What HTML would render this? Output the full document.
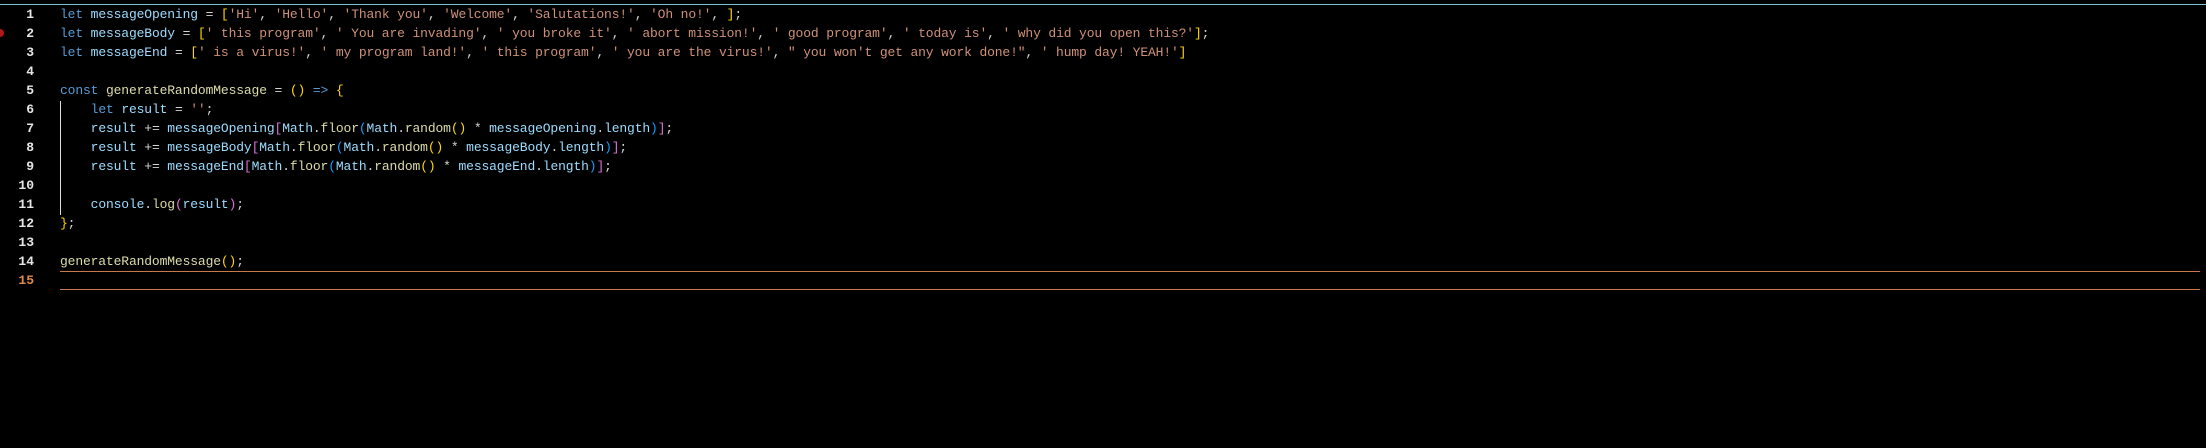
<!DOCTYPE html>
<html><head><meta charset="utf-8"><style>
html,body{margin:0;padding:0;background:#000;width:2206px;height:448px;overflow:hidden;position:relative}
.top{position:absolute;left:0;top:4px;width:2206px;height:1px;background:#7fc4d4}
.code{position:absolute;left:0;top:5px;font-family:"Liberation Mono",monospace;font-size:13px;letter-spacing:-0.14px;line-height:19px;color:#d4d4d4;white-space:pre}
.ln{position:absolute;left:0;width:34px;text-align:right;color:#e6e6e6;font-weight:bold;letter-spacing:0}
.tx{position:absolute;left:60px}
.k{color:#569cd6}.v{color:#9cdcfe}.s{color:#ce9178}.f{color:#dcdcaa}.g{color:#ffd700}.p{color:#da70d6}.b{color:#179fff}
.guide{position:absolute;left:60px;top:101px;width:1px;height:114px;background:#ddd}
.box{position:absolute;left:60px;top:271px;width:2140px;height:17px;border-top:1px solid #c8784a;border-bottom:1px solid #c8784a}
.dot{position:absolute;left:-4px;top:29px;width:8px;height:8px;border-radius:50%;background:#b01818}
</style></head><body>
<div class="top"></div>
<div class="dot"></div>
<div class="guide"></div>
<div class="box"></div>
<div class="code">
<div class="ln" style="top:0">1</div>
<div class="ln" style="top:19px">2</div>
<div class="ln" style="top:38px">3</div>
<div class="ln" style="top:57px">4</div>
<div class="ln" style="top:76px">5</div>
<div class="ln" style="top:95px">6</div>
<div class="ln" style="top:114px">7</div>
<div class="ln" style="top:133px">8</div>
<div class="ln" style="top:152px">9</div>
<div class="ln" style="top:171px">10</div>
<div class="ln" style="top:190px">11</div>
<div class="ln" style="top:209px">12</div>
<div class="ln" style="top:228px">13</div>
<div class="ln" style="top:247px">14</div>
<div class="ln" style="top:266px;color:#e08a48">15</div>
<div class="tx" style="top:0"><span class="k">let</span> <span class="v">messageOpening</span> = <span class="g">[</span><span class="s">'Hi'</span>, <span class="s">'Hello'</span>, <span class="s">'Thank you'</span>, <span class="s">'Welcome'</span>, <span class="s">'Salutations!'</span>, <span class="s">'Oh no!'</span>, <span class="g">]</span>;</div>
<div class="tx" style="top:19px"><span class="k">let</span> <span class="v">messageBody</span> = <span class="g">[</span><span class="s">' this program'</span>, <span class="s">' You are invading'</span>, <span class="s">' you broke it'</span>, <span class="s">' abort mission!'</span>, <span class="s">' good program'</span>, <span class="s">' today is'</span>, <span class="s">' why did you open this?'</span><span class="g">]</span>;</div>
<div class="tx" style="top:38px"><span class="k">let</span> <span class="v">messageEnd</span> = <span class="g">[</span><span class="s">' is a virus!'</span>, <span class="s">' my program land!'</span>, <span class="s">' this program'</span>, <span class="s">' you are the virus!'</span>, <span class="s">" you won't get any work done!"</span>, <span class="s">' hump day! YEAH!'</span><span class="g">]</span></div>
<div class="tx" style="top:76px"><span class="k">const</span> <span class="f">generateRandomMessage</span> = <span class="g">()</span> <span class="k">=&gt;</span> <span class="g">{</span></div>
<div class="tx" style="top:95px">    <span class="k">let</span> <span class="v">result</span> = <span class="s">''</span>;</div>
<div class="tx" style="top:114px">    <span class="v">result</span> += <span class="v">messageOpening</span><span class="p">[</span><span class="v">Math</span>.<span class="f">floor</span><span class="b">(</span><span class="v">Math</span>.<span class="f">random</span><span class="g">()</span> * <span class="v">messageOpening</span>.<span class="v">length</span><span class="b">)</span><span class="p">]</span>;</div>
<div class="tx" style="top:133px">    <span class="v">result</span> += <span class="v">messageBody</span><span class="p">[</span><span class="v">Math</span>.<span class="f">floor</span><span class="b">(</span><span class="v">Math</span>.<span class="f">random</span><span class="g">()</span> * <span class="v">messageBody</span>.<span class="v">length</span><span class="b">)</span><span class="p">]</span>;</div>
<div class="tx" style="top:152px">    <span class="v">result</span> += <span class="v">messageEnd</span><span class="p">[</span><span class="v">Math</span>.<span class="f">floor</span><span class="b">(</span><span class="v">Math</span>.<span class="f">random</span><span class="g">()</span> * <span class="v">messageEnd</span>.<span class="v">length</span><span class="b">)</span><span class="p">]</span>;</div>
<div class="tx" style="top:190px">    <span class="v">console</span>.<span class="f">log</span><span class="p">(</span><span class="v">result</span><span class="p">)</span>;</div>
<div class="tx" style="top:209px"><span class="g">}</span>;</div>
<div class="tx" style="top:247px"><span class="f">generateRandomMessage</span><span class="g">()</span>;</div>
</div>
</body></html>
